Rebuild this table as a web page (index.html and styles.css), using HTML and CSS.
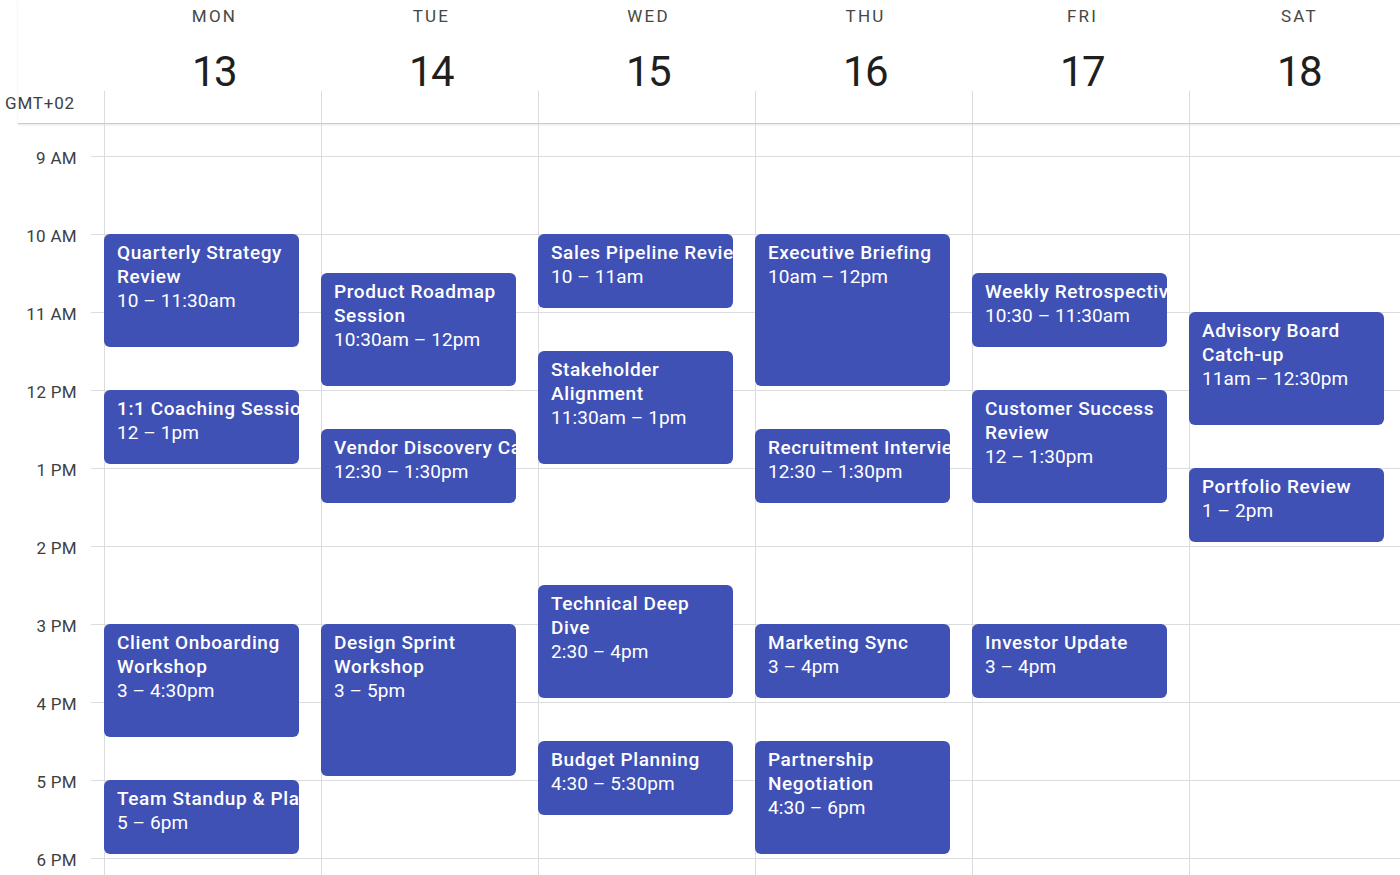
FILE: index.html
```html
<!DOCTYPE html>
<html lang="en">
<head>
<meta charset="utf-8">
<title>Week view</title>
<link rel="stylesheet" href="styles.css">
</head>
<body>
<div class="cal">
  <header class="head">
    <div class="head-inner">
      <div class="tz"><span>GMT+02</span></div>
      <div class="days">
        <div class="dayhead"><div class="dname">MON</div><div class="dnum">13</div><div class="stub"></div></div>
        <div class="dayhead"><div class="dname">TUE</div><div class="dnum">14</div><div class="stub"></div></div>
        <div class="dayhead"><div class="dname">WED</div><div class="dnum">15</div><div class="stub"></div></div>
        <div class="dayhead"><div class="dname">THU</div><div class="dnum">16</div><div class="stub"></div></div>
        <div class="dayhead"><div class="dname">FRI</div><div class="dnum">17</div><div class="stub"></div></div>
        <div class="dayhead"><div class="dname">SAT</div><div class="dnum">18</div><div class="stub"></div></div>
      </div>
    </div>
  </header>
  <main class="body">
    <div class="gutter">
      <div class="hour">9 AM</div>
      <div class="hour">10 AM</div>
      <div class="hour">11 AM</div>
      <div class="hour">12 PM</div>
      <div class="hour">1 PM</div>
      <div class="hour">2 PM</div>
      <div class="hour">3 PM</div>
      <div class="hour">4 PM</div>
      <div class="hour">5 PM</div>
      <div class="hour">6 PM</div>
    </div>
    <div class="cols">
      <div class="col">
        <div class="ev" style="top:110px;height:113px"><div class="t">Quarterly Strategy Review</div><div class="w">10 – 11:30am</div></div>
        <div class="ev one" style="top:266px;height:74px"><div class="t">1:1 Coaching Session</div><div class="w">12 – 1pm</div></div>
        <div class="ev" style="top:500px;height:113px"><div class="t">Client Onboarding Workshop</div><div class="w">3 – 4:30pm</div></div>
        <div class="ev one" style="top:656px;height:74px"><div class="t">Team Standup &amp; Planning</div><div class="w">5 – 6pm</div></div>
      </div>
      <div class="col">
        <div class="ev" style="top:149px;height:113px"><div class="t">Product Roadmap Session</div><div class="w">10:30am – 12pm</div></div>
        <div class="ev one" style="top:305px;height:74px"><div class="t">Vendor Discovery Call</div><div class="w">12:30 – 1:30pm</div></div>
        <div class="ev" style="top:500px;height:152px"><div class="t">Design Sprint Workshop</div><div class="w">3 – 5pm</div></div>
      </div>
      <div class="col">
        <div class="ev one" style="top:110px;height:74px"><div class="t">Sales Pipeline Review</div><div class="w">10 – 11am</div></div>
        <div class="ev" style="top:227px;height:113px"><div class="t">Stakeholder Alignment</div><div class="w">11:30am – 1pm</div></div>
        <div class="ev" style="top:461px;height:113px"><div class="t">Technical Deep Dive</div><div class="w">2:30 – 4pm</div></div>
        <div class="ev one" style="top:617px;height:74px"><div class="t">Budget Planning</div><div class="w">4:30 – 5:30pm</div></div>
      </div>
      <div class="col">
        <div class="ev" style="top:110px;height:152px"><div class="t">Executive Briefing</div><div class="w">10am – 12pm</div></div>
        <div class="ev one" style="top:305px;height:74px"><div class="t">Recruitment Interview</div><div class="w">12:30 – 1:30pm</div></div>
        <div class="ev one" style="top:500px;height:74px"><div class="t">Marketing Sync</div><div class="w">3 – 4pm</div></div>
        <div class="ev" style="top:617px;height:113px"><div class="t">Partnership Negotiation</div><div class="w">4:30 – 6pm</div></div>
      </div>
      <div class="col">
        <div class="ev one" style="top:149px;height:74px"><div class="t">Weekly Retrospective</div><div class="w">10:30 – 11:30am</div></div>
        <div class="ev" style="top:266px;height:113px"><div class="t">Customer Success Review</div><div class="w">12 – 1:30pm</div></div>
        <div class="ev one" style="top:500px;height:74px"><div class="t">Investor Update</div><div class="w">3 – 4pm</div></div>
      </div>
      <div class="col">
        <div class="ev" style="top:188px;height:113px"><div class="t">Advisory Board Catch-up</div><div class="w">11am – 12:30pm</div></div>
        <div class="ev one" style="top:344px;height:74px"><div class="t">Portfolio Review</div><div class="w">1 – 2pm</div></div>
      </div>
    </div>
  </main>
</div>
</body>
</html>
```

FILE: styles.css
```css
html, body {
  margin: 0;
  padding: 0;
  background: #fff;
}
body {
  width: 1400px;
  height: 875px;
  overflow: hidden;
  font-family: Roboto, "Liberation Sans", Arial, sans-serif;
  color: #3c4043;
}
.cal {
  display: flex;
  flex-direction: column;
  width: 1400px;
  height: 875px;
}
.head {
  height: 124px;
  flex: none;
}
.head-inner {
  display: flex;
  margin-left: 18px;
  height: 123px;
  border-bottom: 1px solid #c8cacc;
  box-shadow: 0 1px 2px rgba(60, 64, 67, 0.12);
}
.tz {
  width: 86px;
  flex: none;
  display: flex;
  flex-direction: column;
  justify-content: flex-end;
}
.tz span {
  display: block;
  height: 24px;
  line-height: 24px;
  margin-bottom: 8px;
  margin-left: -13px;
  font-size: 17px;
  color: #3c4043;
  letter-spacing: 0.8px;
}
.days {
  display: grid;
  grid-template-columns: repeat(6, 217px);
  flex: none;
}
.dayhead {
  display: flex;
  flex-direction: column;
  align-items: stretch;
}
.dname {
  height: 32px;
  line-height: 32px;
  text-align: center;
  font-size: 17px;
  letter-spacing: 2.2px;
  color: #444746;
  padding-left: 4px;
}
.dnum {
  height: 43px;
  padding-top: 16px;
  line-height: 48px;
  text-align: center;
  font-size: 42px;
  letter-spacing: -1.5px;
  color: #1f1f1f;
  padding-left: 3px;
}
.stub {
  flex: 1;
  border-left: 1px solid #dadce0;
}
.body {
  flex: 1;
  display: flex;
  overflow: hidden;
  background-image: repeating-linear-gradient(to bottom, #dadce0 0, #dadce0 1px, transparent 1px, transparent 78px);
  background-position: 91px 32px;
  background-size: calc(100% - 91px) calc(100% - 32px);
  background-repeat: no-repeat;
}
.gutter {
  width: 104px;
  flex: none;
  padding-top: 25px;
  box-sizing: border-box;
}
.hour {
  height: 78px;
  line-height: 18px;
  text-align: right;
  padding-right: 27px;
  font-size: 17px;
  letter-spacing: 0.3px;
  color: #3c4043;
}
.cols {
  display: grid;
  grid-template-columns: repeat(6, 217px);
  flex: none;
}
.col {
  position: relative;
  border-left: 1px solid #dadce0;
}
.ev {
  position: absolute;
  left: -1px;
  width: 195px;
  box-sizing: border-box;
  padding: 7px 0 0 13px;
  background: #3f51b5;
  color: #fff;
  border-radius: 6px;
  overflow: hidden;
  font-size: 19px;
  line-height: 24px;
}
.ev .t {
  font-weight: 500;
  letter-spacing: 0.6px;
}
.ev.one .t {
  white-space: nowrap;
}
.ev .w {
  white-space: nowrap;
  letter-spacing: 0.1px;
}
```
